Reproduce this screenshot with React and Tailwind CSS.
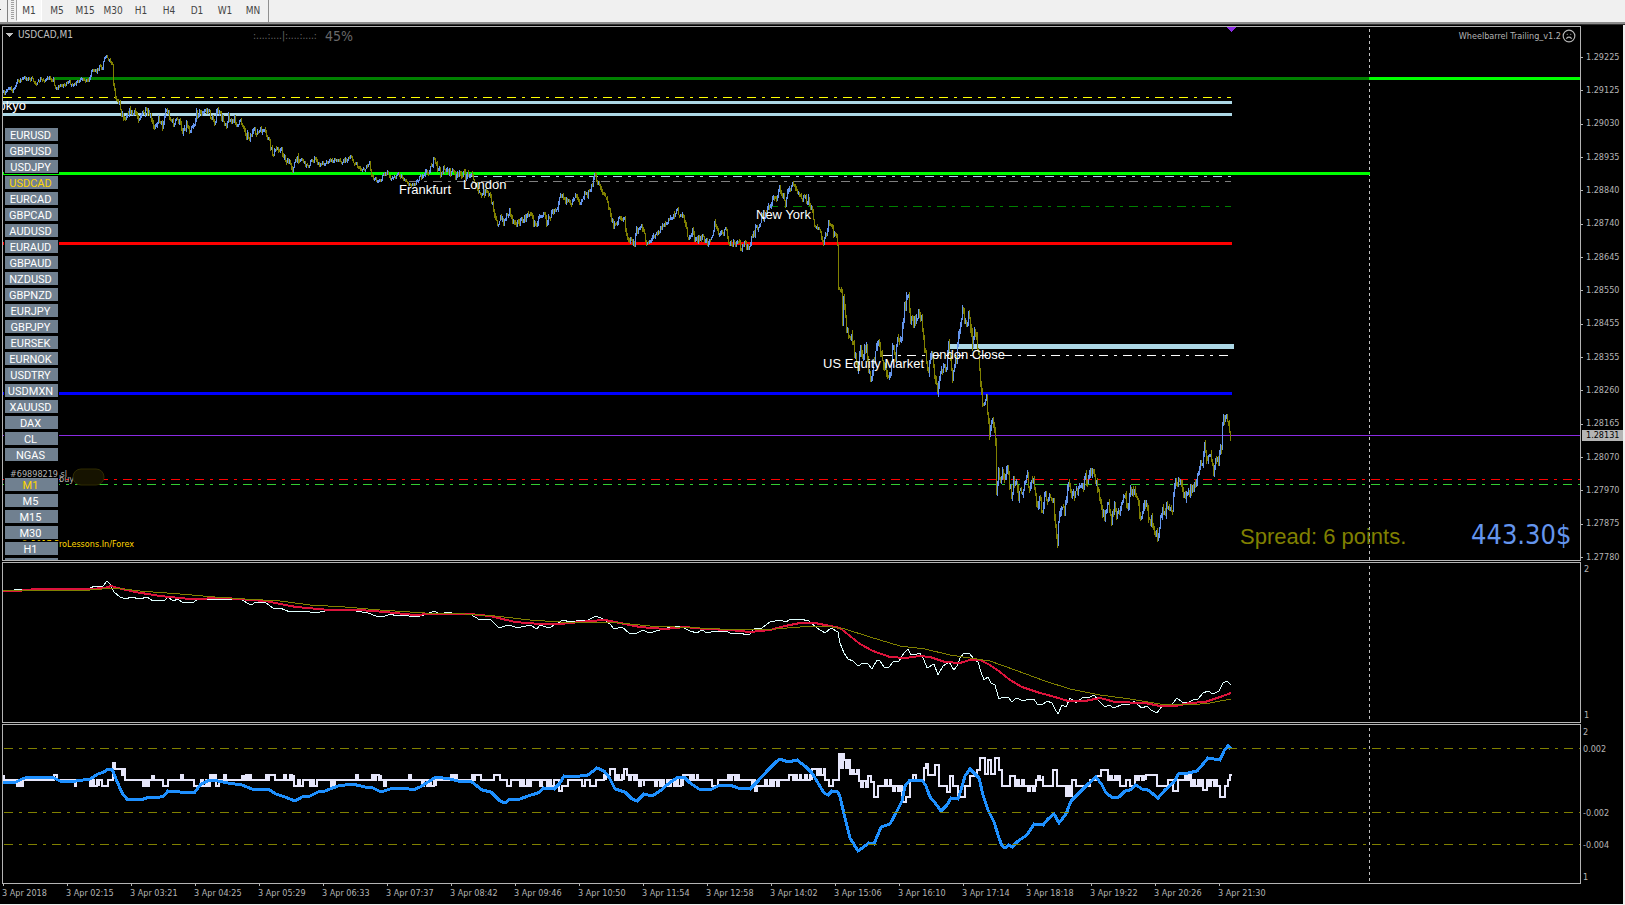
import { useState } from 'react';
import { Frown } from 'lucide-react';

const toolbarFrames = ['M1', 'M5', 'M15', 'M30', 'H1', 'H4', 'D1', 'W1', 'MN'];

const symbols = [
    'EURUSD', 'GBPUSD', 'USDJPY', 'USDCAD', 'EURCAD', 'GBPCAD', 'AUDUSD', 'EURAUD', 'GBPAUD', 'NZDUSD', 'GBPNZD',
    'EURJPY', 'GBPJPY', 'EURSEK', 'EURNOK', 'USDTRY', 'USDMXN', 'XAUUSD', 'DAX', 'CL', 'NGAS',
];

const chartFrames = ['M1', 'M5', 'M15', 'M30', 'H1', 'H4'];

const prices = [
    '1.29225', '1.29125', '1.29030', '1.28935', '1.28840', '1.28740', '1.28645', '1.28550',
    '1.28455', '1.28355', '1.28260', '1.28165', '1.28070', '1.27970', '1.27875', '1.27780',
];

const times = [
    '3 Apr 2018', '3 Apr 02:15', '3 Apr 03:21', '3 Apr 04:25', '3 Apr 05:29', '3 Apr 06:33', '3 Apr 07:37',
    '3 Apr 08:42', '3 Apr 09:46', '3 Apr 10:50', '3 Apr 11:54', '3 Apr 12:58', '3 Apr 14:02', '3 Apr 15:06',
    '3 Apr 16:10', '3 Apr 17:14', '3 Apr 18:18', '3 Apr 19:22', '3 Apr 20:26', '3 Apr 21:30',
];

// x,y pairs
const pricePath = `3,92 5,95 8,88 11,86 13,91 15,88 18,81 22,79 26,78 31,79 34,81 38,84 41,79 46,80 50,79 54,79 55,86 58,88
62,85 67,84 72,82 74,86 78,82 82,80 86,80 90,79 92,71 95,69 97,71 100,67 103,69 104,60 107,54 109,58 112,61 113,68 114,82
115,92 117,97 120,104 122,112 125,119 128,112 131,111 133,114 136,113 139,118 142,114 146,113 150,115 153,124 154,128 157,122
160,119 163,126 165,116 166,110 169,113 172,121 175,125 177,119 180,122 183,131 187,124 190,130 192,126 195,124 197,114
200,112 203,114 206,110 209,111 212,118 215,122 218,111 221,116 224,121 227,124 229,117 232,122 236,120 239,127 241,119
243,124 246,133 250,137 253,133 258,132 262,131 266,133 269,139 271,147 273,153 276,151 279,148 282,151 285,158 288,163
290,163 293,168 296,162 299,158 303,159 306,165 310,164 312,161 316,159 320,166 324,162 330,161 333,160 338,159 342,162
346,160 352,158 355,163 360,168 364,170 370,164 372,174 375,179 381,180 384,175 388,173 392,178 394,178 398,173 402,177
406,180 410,185 412,183 415,184 420,177 424,173 428,172 431,168 434,161 437,165 441,173 447,169 450,172 454,172 458,177
462,173 466,176 470,172 474,178 478,190 481,196 486,192 490,195 494,209 497,219 499,226 501,219 504,222 507,216 510,210
513,220 516,221 520,223 526,219 531,212 534,222 536,225 540,216 544,213 547,222 550,218 554,210 558,206 560,195 562,193
565,198 568,203 571,205 573,198 577,194 580,200 583,197 586,193 590,194 593,182 595,175 597,181 600,184 603,192 606,197
609,206 612,219 614,228 617,221 621,217 625,222 628,237 631,241 635,243 637,232 640,229 644,229 646,240 648,242 652,240
656,232 660,230 664,225 668,222 672,217 675,213 679,212 682,215 685,222 688,235 691,238 693,229 696,241 700,240 703,236
706,243 710,238 713,235 715,223 718,232 721,235 726,229 729,242 733,245 736,243 740,244 742,250 745,240 749,250 752,240
755,234 757,226 760,228 762,216 765,218 768,207 771,209 773,197 777,197 780,190 783,194 786,205 789,188 793,186 796,186
799,192 803,197 806,199 809,200 812,209 815,222 818,228 821,234 824,244 827,235 829,224 832,225 834,234 837,234 838,244
839,290 842,293 843,320 844,298 846,320 848,335 850,342 852,336 854,347 856,357 858,370 861,352 864,356 867,346 869,370
871,380 874,362 878,342 881,352 885,368 888,370 890,376 893,348 896,358 898,342 901,338 903,330 905,306 907,302 909,297
911,320 914,322 917,318 920,315 922,318 924,340 927,358 929,372 932,356 934,362 936,378 938,395 940,380 943,368 947,368
949,345 951,360 953,380 955,365 957,357 959,330 961,325 963,310 965,322 967,328 969,310 971,325 973,345 975,336 977,338
980,370 982,396 985,405 987,400 988,410 990,440 992,418 994,425 996,440 997,490 999,470 1001,480 1003,475 1005,480
1008,465 1010,485 1012,496 1014,480 1017,482 1019,498 1021,485 1023,498 1026,485 1028,478 1031,490 1033,480 1036,490
1038,505 1041,500 1043,510 1046,492 1049,500 1052,495 1054,505 1056,530 1058,541 1059,520 1061,510 1063,508 1065,515
1067,498 1069,480 1071,495 1074,492 1077,495 1080,487 1083,488 1086,478 1089,480 1091,475 1093,466 1095,472 1098,488
1101,500 1103,510 1106,515 1109,506 1112,520 1115,508 1118,515 1121,505 1124,492 1128,508 1131,493 1134,490 1137,497
1140,512 1142,516 1145,504 1148,512 1151,522 1152,515 1155,533 1157,538 1159,530 1162,510 1165,512 1168,507 1171,505
1173,508 1175,490 1177,480 1180,483 1183,490 1186,498 1189,490 1193,488 1197,482 1200,468 1203,465 1205,448 1208,460
1211,458 1214,470 1216,455 1220,458 1222,445 1224,416 1226,422 1228,420 1230,430 1231,435`;

const fastLine = `3,592 19,589 34,589 90,588 95,586 103,586 107,581 110,584 114,592 120,597 126,599 131,597 140,599 147,597
153,601 161,600 164,601 168,597 173,601 178,599 183,603 194,602 199,598 205,600 215,599 240,599 251,605 256,602 266,603
273,608 280,608 290,612 300,611 310,612 320,612 330,610 350,610 368,613 376,616 385,616 391,614 396,616 405,615 413,617
420,616 427,614 434,611 440,614 448,612 455,614 470,614 480,620 490,619 499,628 505,626 510,625 517,628 530,625 537,629
540,625 549,628 556,624 563,620 570,622 576,621 588,620 596,616 603,619 610,624 614,629 622,627 629,633 637,633 643,630
649,633 660,630 670,627 680,626 690,631 697,633 702,630 707,633 715,631 725,631 733,634 742,633 745,635 750,634 754,629
762,628 770,622 780,620 786,622 791,619 800,619 809,621 817,628 825,633 831,628 838,632 840,643 844,653 848,659 853,661
858,666 863,663 868,664 872,669 877,660 880,661 884,667 889,667 893,662 899,661 904,653 908,649 911,655 917,654 920,653
924,660 927,668 934,664 938,675 943,666 949,662 954,670 957,666 960,658 964,653 969,653 974,659 978,662 981,672 984,680
988,677 991,683 995,685 999,699 1003,697 1008,697 1012,702 1016,698 1024,701 1028,699 1034,699 1037,704 1042,705 1047,701
1052,703 1055,709 1058,714 1062,705 1066,707 1070,698 1076,703 1082,698 1090,697 1094,695 1098,700 1105,707 1109,705
1114,708 1123,704 1129,705 1134,701 1138,705 1142,708 1147,706 1151,710 1157,713 1162,706 1167,707 1171,706 1177,698
1182,702 1187,703 1193,700 1198,699 1203,693 1208,691 1213,694 1219,691 1223,683 1227,681 1231,685`;

const midLine = `3,591 18,591 35,589 90,589 105,588 111,586 118,588 135,592 160,596 190,599 225,598 265,601 296,607 330,610
360,610 385,612 415,615 430,614 470,614 490,616 515,622 540,624 560,624 590,621 605,620 620,623 640,627 665,629 685,627
705,629 730,630 750,632 770,630 785,626 800,623 815,623 830,626 840,628 850,636 860,644 873,651 890,657 905,658 920,656
930,657 945,662 960,663 970,660 980,660 990,665 1000,672 1010,680 1022,687 1040,693 1055,697 1068,701 1085,701 1100,698
1115,702 1145,703 1160,706 1175,706 1190,703 1205,702 1220,697 1231,693`;

const slowLine = `3,590 90,590 115,588 140,591 180,594 215,597 245,599 280,601 310,605 345,607 380,610 425,613 465,614
495,616 530,620 560,622 610,622 650,626 700,628 740,630 775,629 800,627 825,626 845,629 870,637 900,646 925,649 950,655
970,658 990,661 1015,670 1045,681 1070,689 1100,695 1130,699 1160,704 1190,705 1210,703 1231,699`;

const momentumLine = `3,782 16,782 22,779 28,777 54,778 60,781 76,781 90,779 98,774 104,772 108,769 112,769 116,779 122,793
127,799 134,799 140,800 150,797 156,798 164,796 168,791 180,792 195,792 201,784 210,780 218,781 228,783 242,785 252,789
268,789 276,794 285,797 295,801 302,797 310,796 318,792 325,791 338,786 352,784 365,787 373,788 381,792 390,789 405,788
413,790 420,787 436,777 450,779 458,781 472,782 482,790 491,792 500,801 505,803 510,799 520,799 528,796 538,793 544,788
554,789 560,783 564,776 572,777 588,775 597,768 604,771 609,777 615,789 625,792 632,799 637,801 644,794 652,796 660,791
668,784 678,777 684,777 690,783 699,789 710,790 720,785 730,785 738,788 750,789 758,781 768,770 777,761 780,759 788,762
797,760 805,766 812,773 818,783 824,793 828,795 832,791 838,792 840,797 845,818 850,838 858,851 865,846 869,843 874,844
881,827 890,824 897,811 902,801 905,786 910,780 922,780 926,786 930,797 936,804 941,811 947,805 951,798 958,799 961,790
965,776 970,769 975,774 979,778 983,795 988,810 994,822 999,838 1002,846 1005,848 1009,845 1012,847 1018,841 1027,835
1034,824 1043,825 1048,819 1054,814 1059,823 1066,814 1071,801 1079,793 1088,784 1096,777 1102,785 1106,793 1113,798
1119,797 1125,791 1130,790 1136,785 1142,789 1148,790 1158,798 1165,790 1174,782 1179,773 1188,773 1197,771 1203,764
1208,758 1220,760 1224,751 1228,746 1231,749`;

// [from, to, level, second level when the value keeps flipping]
const steps = [
    [3, 4, 776], [4, 17, 780], [17, 23, 786, 780], [23, 54, 780], [54, 57, 775], [57, 75, 780], [75, 76, 786], [77, 90, 780],
    [90, 99, 786, 780], [99, 102, 780], [102, 108, 786], [108, 113, 780], [113, 115, 763], [115, 122, 769], [122, 125, 775, 769],
    [126, 143, 780], [144, 145, 786], [146, 147, 780], [148, 149, 786], [150, 152, 780], [152, 154, 776], [154, 163, 780],
    [163, 168, 786], [169, 181, 780], [181, 183, 775], [183, 194, 780], [194, 198, 786], [199, 209, 786, 780],
    [210, 216, 775, 780], [217, 219, 786], [219, 224, 780], [224, 226, 775], [226, 242, 780], [242, 244, 776], [244, 246, 780],
    [246, 251, 775, 780], [252, 266, 780], [266, 269, 775, 780], [271, 275, 775], [276, 284, 780], [284, 287, 775, 780],
    [288, 289, 780], [290, 294, 775, 780], [296, 298, 786], [299, 300, 780], [301, 303, 786], [304, 310, 780],
    [310, 317, 786, 780], [318, 331, 780], [331, 335, 786, 780], [335, 356, 780], [356, 358, 775], [358, 372, 780],
    [372, 381, 775, 780], [382, 384, 780], [384, 386, 786], [386, 409, 780], [409, 411, 775], [411, 420, 780],
    [420, 436, 780, 786], [436, 451, 780], [451, 457, 775, 780], [457, 472, 780], [472, 475, 775, 780], [476, 481, 775],
    [482, 494, 780], [495, 500, 775], [501, 507, 780], [508, 511, 786], [512, 520, 780], [520, 532, 786, 780], [534, 537, 780],
    [538, 543, 780, 786], [545, 547, 780], [547, 554, 786, 780], [554, 559, 780], [560, 562, 791], [564, 568, 786],
    [569, 582, 780], [583, 585, 786], [586, 590, 780], [590, 596, 786], [597, 601, 780], [602, 606, 780, 775], [607, 610, 775],
    [611, 614, 769], [615, 624, 780, 775], [625, 627, 769], [627, 636, 775, 780], [637, 644, 780, 786], [644, 652, 780],
    [653, 672, 780, 786], [674, 683, 786, 780], [684, 690, 775], [690, 698, 780, 775], [698, 712, 780], [713, 718, 786],
    [719, 728, 780], [728, 740, 775, 780], [740, 750, 780], [750, 755, 780, 786], [755, 757, 791], [758, 763, 786],
    [763, 780, 786, 780], [780, 789, 780], [789, 793, 775], [793, 801, 780, 775], [801, 803, 780], [803, 812, 780, 775],
    [813, 816, 769], [817, 825, 775, 769], [826, 829, 780], [829, 833, 786], [834, 838, 780], [839, 843, 754, 768],
    [844, 849, 760, 768], [850, 858, 774, 770], [859, 868, 781, 787], [869, 871, 776], [872, 874, 782], [875, 878, 797],
    [879, 882, 786], [883, 890, 786, 780], [891, 902, 786, 791], [903, 906, 802], [907, 910, 797], [910, 913, 780],
    [913, 916, 775], [917, 924, 780], [924, 926, 768], [927, 928, 764], [929, 935, 775], [936, 939, 765], [940, 947, 786],
    [948, 950, 792], [951, 953, 776], [954, 958, 786], [959, 965, 797], [966, 970, 786], [971, 977, 776], [978, 980, 770],
    [981, 985, 758], [986, 988, 774], [989, 991, 760], [992, 995, 774], [996, 999, 758], [1000, 1002, 770], [1003, 1010, 786],
    [1011, 1014, 776], [1015, 1025, 786, 780], [1026, 1035, 786, 791], [1036, 1043, 780, 776], [1044, 1053, 786],
    [1054, 1057, 770], [1058, 1065, 786], [1066, 1072, 796, 786], [1073, 1076, 780], [1077, 1090, 786], [1090, 1096, 780],
    [1097, 1101, 776], [1102, 1107, 770], [1108, 1120, 780, 776], [1121, 1126, 786], [1127, 1130, 780], [1131, 1134, 786],
    [1135, 1146, 776, 780], [1147, 1157, 775], [1158, 1168, 786], [1169, 1173, 780], [1174, 1178, 791], [1179, 1184, 780],
    [1185, 1190, 775, 780], [1191, 1203, 786, 780], [1204, 1206, 790], [1207, 1217, 780, 786], [1218, 1220, 786],
    [1223, 1225, 797], [1226, 1228, 786], [1229, 1230, 780], [1231, 1232, 775],
];

const stepPath = () => {
    const widths = [2, 2, 3];
    let d = '';
    steps.forEach(([from, to, a, b]) => {
        if (b === undefined) {
            d += `${d ? 'V' : `M${from} `}${a}H${to}`;
            return;
        }
        for (let x = from, i = 0; x <= to; x += widths[i % 3], i++) {
            d += `H${x}V${i % 2 ? b : a}`;
        }
        d += `H${to}`;
    });
    return d;
};

const buildBars = () => {
    const points = pricePath.split(/\s+/).map((p) => p.split(',').map(Number));
    const bars = { up: '', down: '' };
    let seed = 7;
    const random = () => {
        seed = (seed * 16807) % 2147483647;
        return seed / 2147483647;
    };
    let previous = points[0][1];
    for (let i = 1; i < points.length; i++) {
        const [x0, y0] = points[i - 1];
        const [x1, y1] = points[i];
        for (let x = x0; x < x1; x++) {
            const swing = x < 110 || (x > 300 && x < 420) ? 4 : x > 840 ? 11 : 7;
            const close = y0 + ((y1 - y0) * (x + 1 - x0)) / (x1 - x0) + (random() - 0.5) * swing;
            const top = Math.round(Math.min(previous, close) - random() * swing * 0.4);
            const bottom = Math.max(top + 3, Math.round(Math.max(previous, close) + random() * swing * 0.4));
            bars[close < previous ? 'up' : 'down'] += `M${x} ${top}h1V${bottom}h-1z`;
            previous = close;
        }
    }
    return bars;
};

const bars = buildBars();

function Level({ x1 = 3, x2 = 1232, y, size = 1, color, dash }) {
    return (
        <line x1={x1} x2={x2} y1={y + size / 2} y2={y + size / 2} stroke={color} strokeWidth={size} strokeDasharray={dash ? '9 6 3 6' : undefined} />
    );
}

function PeriodLine({ y1, y2 }) {
    return <line x1="1369.5" x2="1369.5" y1={y1} y2={y2} stroke="#c0c0c0" strokeDasharray="3 3" />;
}

function ChartButton({ label, active, onClick }) {
    return (
        <button
            type="button"
            onClick={onClick}
            className={`h-[15px] w-[55px] overflow-hidden border border-black bg-[#708090] pr-0.5 text-center text-[11px] leading-[15px] font-[family-name:Roboto,sans-serif] ${active ? 'text-[#ffd700]' : 'text-white'}`}
        >
            {label}
        </button>
    );
}

export default function App() {
    const [symbol, setSymbol] = useState('USDCAD');
    const [frame, setFrame] = useState('M1');

    return (
        <div className="min-h-screen border-r-2 border-b border-[#f0f0f0] bg-black text-[#b4b4b4] font-[family-name:'DejaVu_Sans_Condensed','DejaVu_Sans',sans-serif]">
            {/* Timeframe toolbar */}
            <div className="-mr-0.5 flex h-[22px] items-start bg-[#f0f0f0] text-[#444]">
                <div className="mt-[9px] h-px w-px bg-[#444]"></div>
                <div className="ml-1.5 h-[22px] w-px bg-[#808080]"></div>
                <div className="ml-[3px] h-5 w-[3px] bg-[repeating-linear-gradient(#a0a0a0_0_1px,#f0f0f0_1px_2px)]"></div>
                <div className="ml-px flex">
                    {toolbarFrames.map((item) => (
                        <button
                            key={item}
                            type="button"
                            onClick={() => setFrame(item)}
                            className={`mx-px h-[21px] w-[26px] border border-t-0 text-center text-[10px] leading-[21px] ${frame === item ? 'border-white border-l-[#a0a0a0] bg-[#f8f8f8]' : 'border-transparent'}`}
                        >
                            {item}
                        </button>
                    ))}
                </div>
                <div className="ml-px h-[22px] w-px bg-[#909090]"></div>
            </div>
            <div className="-mr-0.5 h-[3px] border-b border-[#333] bg-[#8c8c8c]"></div>

            <div className="pt-px pl-0.5">
                {/* Price chart */}
                <div className="flex">
                    <div className="relative min-w-0 flex-1 overflow-hidden border border-[#b4b4b4]">
                        <svg viewBox="3 27 1577 533" className="block w-full" shapeRendering="crispEdges">
                            <PeriodLine y1={29} y2={560} />
                            <Level x1={54} x2={1369} y={77} size={3} color="#008000" />
                            <Level x1={1369} x2={1580} y={77} size={3} color="#00ff00" />
                            <Level y={97} x2={1231} color="#ffff00" dash />
                            <Level y={101} size={3} color="#add8e6" />
                            <Level y={113} size={3} color="#add8e6" />
                            <Level y={172} x2={1370} size={3} color="#00ff00" />
                            <Level x1={469} x2={1231} y={176} color="#add8e6" dash />
                            <Level x1={409} x2={1231} y={181} color="#808080" dash />
                            <Level x1={769} x2={1231} y={206} color="#008000" dash />
                            <Level y={242} size={3} color="#ff0000" />
                            <Level x1={948} x2={1234} y={344} size={5} color="#add8e6" />
                            <Level x1={883} x2={1229} y={355} color="#ffffff" dash />
                            <Level y={392} size={3} color="#0000ff" />
                            <Level x2={1580} y={435} color="#8a2be2" />
                            <Level x2={1580} y={479} color="#ff0000" dash />
                            <Level x2={1580} y={484} color="#32cd32" dash />
                            <path d={bars.down} fill="#808000" />
                            <path d={bars.up} fill="#6495ed" />
                            <path d="M1227 27h9v1h-1v1h-1v1h-1v1h-1v1h-1v-1h-1v-1h-1v-1h-1v-1h-1z" fill="#8a2be2" />
                            <path d="M6 33h7l-3 4h-1z" fill="#c0c0c0" />
                            <g className="font-[family-name:'Liberation_Sans',Arial,sans-serif] text-[13px]" fill="#ffffff">
                                <text x="-8" y="110">Tokyo</text>
                                <text x="399" y="194">Frankfurt</text>
                                <text x="463" y="189">London</text>
                                <text x="756" y="219">New York</text>
                                <text x="823" y="368">US Equity Market</text>
                                <text x="932" y="359">ondon Close</text>
                                <text x="1240" y="544" className="text-[22px]" fill="#808000">Spread: 6 points.</text>
                            </g>
                            <text x="1471" y="544" className="text-[27px]" fill="#6495ed">443.30$</text>
                            <g className="text-[9px]" fill="#b4b4b4">
                                <text x="10" y="477">#69898219 sl</text>
                                <text x="59" y="482">buy</text>
                                <text x="134" y="547" textAnchor="end" fill="#ffd700">© 2017 ProLessons.In/Forex</text>
                            </g>
                            <rect x="73" y="469" width="31" height="16" rx="8" fill="#161300" stroke="#2e2b00" shapeRendering="auto" />
                        </svg>

                        <div className="absolute top-0.5 left-[15px] text-[10px] leading-3 text-[#c0c0c0]">USDCAD,M1</div>
                        <div className="absolute top-px left-[250px] flex items-center gap-2 leading-4 text-[#696969]">
                            <span className="text-[10px]">:....:....|:....:....:</span>
                            <span className="text-[14px]">45%</span>
                        </div>
                        <div className="absolute top-0.5 right-1 flex items-center gap-px text-[9px] leading-[14px] text-[#b4b4b4]">
                            Wheelbarrel Trailing_v1.2
                            <Frown size={14} strokeWidth={2} />
                        </div>

                        <div className="absolute top-[100px] left-px flex flex-col gap-px">
                            {symbols.map((item) => (
                                <ChartButton key={item} label={item} active={symbol === item} onClick={() => setSymbol(item)} />
                            ))}
                        </div>
                        <div className="absolute top-[450px] left-px flex flex-col gap-px">
                            {chartFrames.map((item) => (
                                <ChartButton key={item} label={item} active={frame === item} onClick={() => setFrame(item)} />
                            ))}
                        </div>
                    </div>
                    <div className="relative flex w-[42px] flex-col justify-between pt-7 text-[9px]">
                        {prices.map((price) => (
                            <div key={price} className="flex h-[7px] items-center gap-[3px]">
                                <span className="h-px w-0.5 bg-[#b4b4b4]"></span>
                                {price}
                            </div>
                        ))}
                        <div className="absolute top-[404px] left-px h-[11px] w-[41px] bg-[#b4b4b4] pl-1 leading-[11px] text-black">1.28131</div>
                    </div>
                </div>

                {/* Averages window */}
                <div className="mt-px flex">
                    <div className="min-w-0 flex-1 border border-[#b4b4b4]">
                        <svg viewBox="3 563 1577 159" className="block w-full" shapeRendering="crispEdges" fill="none">
                            <PeriodLine y1={566} y2={722} />
                            <polyline points={fastLine} stroke="#e0ffff" />
                            <polyline points={midLine} stroke="#dc143c" strokeWidth="2" />
                            <polyline points={slowLine} stroke="#808000" />
                        </svg>
                    </div>
                    <div className="flex w-[42px] flex-col justify-between py-[3px] pl-[3px] text-[9px] leading-[9px]">
                        <span>2</span>
                        <span>1</span>
                    </div>
                </div>

                {/* Momentum window */}
                <div className="mt-px flex">
                    <div className="min-w-0 flex-1 border border-[#b4b4b4]">
                        <svg viewBox="3 725 1577 158" className="block w-full" shapeRendering="crispEdges" fill="none">
                            <PeriodLine y1={728} y2={883} />
                            <path d={stepPath()} stroke="#e6e6fa" strokeWidth="2" />
                            <polyline points={momentumLine} stroke="#1e90ff" strokeWidth="3" />
                            <Level x1={4} x2={1580} y={748} color="#808000" dash />
                            <Level x1={4} x2={1580} y={812} color="#808000" dash />
                            <Level x1={4} x2={1580} y={844} color="#808000" dash />
                        </svg>
                    </div>
                    <div className="flex w-[42px] flex-col pt-1 pl-0.5 text-[9px] leading-[9px]">
                        <span>2</span>
                        <span className="mt-2">0.002</span>
                        <span className="mt-[55px]">-0.002</span>
                        <span className="mt-[23px]">-0.004</span>
                        <span className="mt-[23px]">1</span>
                    </div>
                </div>

                {/* Time axis */}
                <div className="flex h-5 overflow-hidden text-[9px] leading-[14px]">
                    {times.map((time) => (
                        <div key={time} className="w-16 shrink-0 whitespace-nowrap">
                            <div className="ml-px h-0.5 w-px bg-[#b4b4b4]"></div>
                            {time}
                        </div>
                    ))}
                </div>
            </div>
        </div>
    );
}
